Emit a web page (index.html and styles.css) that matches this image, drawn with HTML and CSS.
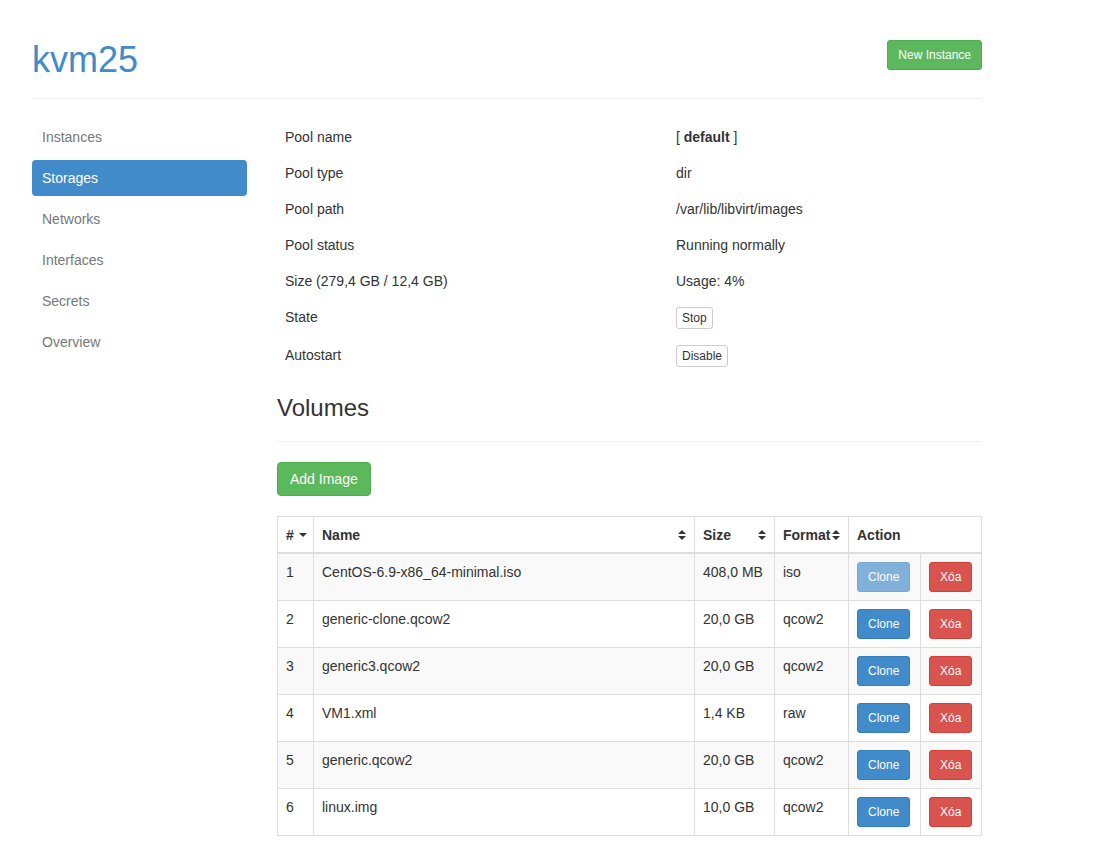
FILE: index.html
```html
<!DOCTYPE html>
<html>
<head>
<meta charset="utf-8">
<title>kvm25 - Storages</title>
<link rel="stylesheet" href="styles.css">
</head>
<body>
<div class="container">
  <header class="page-head">
    <h1 class="host-title">kvm25</h1>
    <button class="btn btn-success btn-sm">New Instance</button>
  </header>
  <div class="layout">
    <nav class="side-nav">
      <a class="pill" href="#">Instances</a>
      <a class="pill active" href="#">Storages</a>
      <a class="pill" href="#">Networks</a>
      <a class="pill" href="#">Interfaces</a>
      <a class="pill" href="#">Secrets</a>
      <a class="pill" href="#">Overview</a>
    </nav>
    <main class="main">
      <table class="info-table">
        <colgroup><col class="info-label"><col></colgroup>
        <tbody>
          <tr><td>Pool name</td><td>[ <strong>default</strong> ]</td></tr>
          <tr><td>Pool type</td><td>dir</td></tr>
          <tr><td>Pool path</td><td>/var/lib/libvirt/images</td></tr>
          <tr><td>Pool status</td><td>Running normally</td></tr>
          <tr><td>Size (279,4 GB / 12,4 GB)</td><td>Usage: 4%</td></tr>
          <tr><td>State</td><td><button class="btn btn-default btn-xs">Stop</button></td></tr>
          <tr><td>Autostart</td><td><button class="btn btn-default btn-xs">Disable</button></td></tr>
        </tbody>
      </table>
      <h3 class="section-title">Volumes</h3>
      <button class="btn btn-success btn-md">Add Image</button>
      <table class="vol-table">
        <colgroup>
          <col class="c-num"><col class="c-name"><col class="c-size"><col class="c-fmt"><col class="c-clone"><col class="c-del">
        </colgroup>
        <thead>
          <tr>
            <th><span class="th-in">#<span class="caret"></span></span></th>
            <th><span class="th-in sortable">Name<svg class="sort" viewBox="0 0 8 12" width="8" height="12"><path d="M0 5 L4 1 L8 5 Z M0 7 L8 7 L4 11 Z"/></svg></span></th>
            <th><span class="th-in sortable">Size<svg class="sort" viewBox="0 0 8 12" width="8" height="12"><path d="M0 5 L4 1 L8 5 Z M0 7 L8 7 L4 11 Z"/></svg></span></th>
            <th><span class="th-in sortable">Format<svg class="sort" viewBox="0 0 8 12" width="8" height="12"><path d="M0 5 L4 1 L8 5 Z M0 7 L8 7 L4 11 Z"/></svg></span></th>
            <th colspan="2">Action</th>
          </tr>
        </thead>
        <tbody>
          <tr><td>1</td><td>CentOS-6.9-x86_64-minimal.iso</td><td>408,0 MB</td><td>iso</td><td><button class="btn btn-primary btn-sm disabled">Clone</button></td><td><button class="btn btn-danger btn-sm">Xóa</button></td></tr>
          <tr><td>2</td><td>generic-clone.qcow2</td><td>20,0 GB</td><td>qcow2</td><td><button class="btn btn-primary btn-sm">Clone</button></td><td><button class="btn btn-danger btn-sm">Xóa</button></td></tr>
          <tr><td>3</td><td>generic3.qcow2</td><td>20,0 GB</td><td>qcow2</td><td><button class="btn btn-primary btn-sm">Clone</button></td><td><button class="btn btn-danger btn-sm">Xóa</button></td></tr>
          <tr><td>4</td><td>VM1.xml</td><td>1,4 KB</td><td>raw</td><td><button class="btn btn-primary btn-sm">Clone</button></td><td><button class="btn btn-danger btn-sm">Xóa</button></td></tr>
          <tr><td>5</td><td>generic.qcow2</td><td>20,0 GB</td><td>qcow2</td><td><button class="btn btn-primary btn-sm">Clone</button></td><td><button class="btn btn-danger btn-sm">Xóa</button></td></tr>
          <tr><td>6</td><td>linux.img</td><td>10,0 GB</td><td>qcow2</td><td><button class="btn btn-primary btn-sm">Clone</button></td><td><button class="btn btn-danger btn-sm">Xóa</button></td></tr>
        </tbody>
      </table>
    </main>
  </div>
</div>
</body>
</html>
```
FILE: styles.css
```css
* { box-sizing: border-box; }
html, body { margin: 0; padding: 0; background: #fff; }
body {
  font-family: "Liberation Sans", Arial, sans-serif;
  font-size: 14px;
  line-height: 20px;
  color: #333;
}
.container { width: 950px; margin-left: 32px; }

.page-head {
  display: flex;
  justify-content: space-between;
  align-items: flex-start;
  padding-top: 40px;
  padding-bottom: 18px;
  border-bottom: 1px solid #eee;
}
.host-title {
  margin: 0;
  font-size: 36px;
  font-weight: 500;
  line-height: 39.6px;
  color: #428bca;
}

.btn {
  display: inline-block;
  font-family: inherit;
  font-weight: normal;
  text-align: center;
  border: 1px solid transparent;
  border-radius: 4px;
  cursor: pointer;
  margin: 0;
}
.btn-sm { font-size: 12px; line-height: 18px; padding: 5px 10px; border-radius: 3px; }
.btn-xs { font-size: 12px; line-height: 18px; padding: 1px 5px; border-radius: 3px; }
.btn-md { font-size: 14px; line-height: 20px; padding: 6px 12px; }
.btn-success { background: #5cb85c; border-color: #4cae4c; color: #fff; }
.btn-primary { background: #428bca; border-color: #357ebd; color: #fff; }
.btn-danger { background: #d9534f; border-color: #d43f3a; color: #fff; }
.btn-default { background: #fff; border-color: #ccc; color: #333; }
.btn.disabled { opacity: .65; cursor: default; }

.layout {
  display: grid;
  grid-template-columns: 215px 705px;
  column-gap: 30px;
  padding-top: 20px;
}
.side-nav { display: flex; flex-direction: column; gap: 5px; }
.pill {
  display: block;
  padding: 8px 10px;
  line-height: 20px;
  color: #777;
  text-decoration: none;
  border-radius: 4px;
}
.pill.active { background: #428bca; color: #fff; }

.info-table { width: 705px; border-collapse: collapse; margin-bottom: 20px; }
.info-label { width: 391px; }
.info-table td { padding: 8px; vertical-align: top; line-height: 20px; }
.info-table td .btn { vertical-align: top; }

.section-title {
  margin: 0;
  font-size: 24px;
  font-weight: 500;
  line-height: 26.4px;
  padding-bottom: 20px;
  border-bottom: 1px solid #eee;
  margin-bottom: 20px;
}

.vol-table {
  width: 704px;
  margin-top: 20px;
  border-collapse: collapse;
  table-layout: fixed;
  border: 1px solid #ddd;
}
.c-num { width: 36px; }
.c-name { width: 381px; }
.c-size { width: 80px; }
.c-fmt { width: 74px; }
.c-clone { width: 72px; }
.c-del { width: 61px; }
.vol-table th, .vol-table td {
  border: 1px solid #ddd;
  padding: 8px;
  text-align: left;
  vertical-align: top;
}
.vol-table th {
  font-weight: bold;
  border-bottom-width: 2px;
  padding-bottom: 7px;
  vertical-align: bottom;
}
.th-in { display: flex; align-items: center; }
.th-in.sortable { justify-content: space-between; }
.sort { fill: #333; flex: none; }
.caret {
  display: inline-block;
  width: 0; height: 0;
  margin-left: 5px;
  border-top: 4px solid #333;
  border-left: 4px solid transparent;
  border-right: 4px solid transparent;
}
.vol-table tbody tr:nth-child(odd) { background: #f9f9f9; }
.vol-table td .btn { vertical-align: top; }
```
